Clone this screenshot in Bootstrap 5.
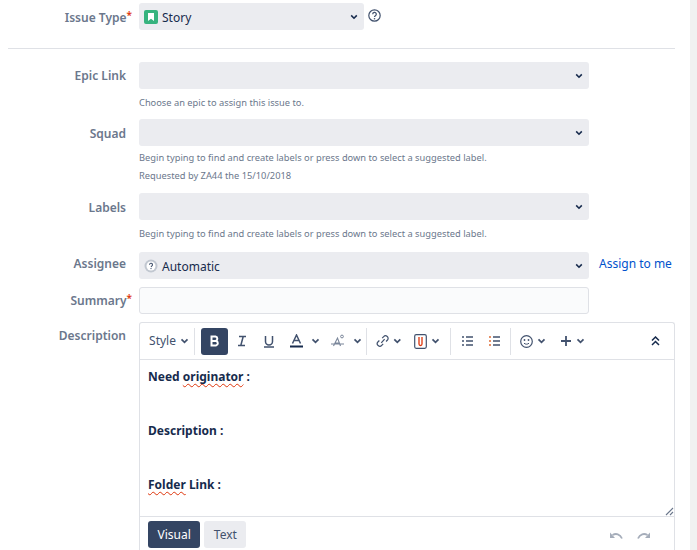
<!DOCTYPE html>
<html lang="en"><head><meta charset="utf-8"><title>Create Issue</title>
<link href="https://cdn.jsdelivr.net/npm/bootstrap@5.3.0/dist/css/bootstrap.min.css" rel="stylesheet">
<style>
html,body{height:550px;overflow:hidden;background:#fff}
body{font-family:"Noto Sans",sans-serif;font-size:12px;color:#172b4d}
.page-wrap{width:690px;height:550px;overflow:hidden;padding-top:3px}
.scroll-strip{position:fixed;top:0;right:0;width:7px;height:550px;background:#f1f1f1}
.frow{display:flex;align-items:flex-start}
.flabel{width:126px;flex:none;text-align:right;color:#6b778c;font-weight:600;font-size:12px;line-height:20px;padding-top:4px}
.flabel.up{padding-top:2px}
.flabel.lo{padding-top:5px}
.req{color:#de350b;font-size:10px;vertical-align:top;line-height:14px;margin-right:-6px}
.fbody{margin-left:13px;flex:none;width:450px}
.fakesel{height:27px;border-radius:3px;background:#ebecf0;display:flex;align-items:center;padding:0 6px 0 5px;font-size:12px;line-height:20px}
.seltxt{padding-top:2px}
.chev{margin-left:auto;flex:none}
.w-short{width:225px}
.icon-gap{margin-right:4px}
.helptxt{font-size:9.3px;line-height:18px;color:#6b778c;margin-top:5px}
.helptxt.tight{margin-top:3px}
.helptxt + .helptxt{margin-top:0}
.divider{margin:18px 15px 13px 8px;border-top:1px solid #dfe1e6;height:0}
.summary-box{height:27px;border:1px solid #dfe1e6;border-radius:3px;background:#fafbfc}
.editor{margin-left:13px;width:536px;border:1px solid #dfe1e6;border-radius:3px 3px 0 0;border-bottom:0;height:240px}
.tbar{height:37px;border-bottom:1px solid #dfe1e6;display:flex;align-items:center;padding-left:4px;color:#42526e}
.tbtn{height:27px;display:flex;align-items:center;justify-content:center;flex:none}
.tsep{width:1px;height:27px;background:#dfe1e6;flex:none}
.tbtn.on{background:#344563;border-radius:3px}
.w-style{width:50px;font-size:12px}
.w27{width:27px}.w45{width:45px}.w38{width:38px}.w26{width:26px}.w32{width:32px}.w22{width:22px}.w30{width:30px}
.ml1{margin-left:1px}.ml5{margin-left:5px}.ml7{margin-left:7px}.ml9{margin-left:9px}.ml11{margin-left:11px}.mr6{margin-right:6px}
.econtent{height:157px;padding:3px 8px;font-weight:700;font-size:12px;color:#172b4d;line-height:27px;border-bottom:1px solid #dfe1e6;position:relative}
.spell{text-decoration:underline wavy #de350b 1px;text-underline-offset:2px;text-decoration-skip-ink:none}
.grip{position:absolute;right:0;bottom:0}
.ebottom{display:flex;align-items:center;padding:4px 0 0 8px;gap:4px}
.mode{height:27px;border-radius:3px;display:flex;align-items:center;padding:0 9.500px;font-size:12px;background:#ebecf0;color:#42526e}
.mode.active{background:#344563;color:#fff}
.undos{margin-left:auto;margin-right:24px;display:flex;gap:14px}
.assign{color:#0052cc;font-size:12px;text-decoration:none;margin-left:10px;line-height:20px;padding-top:2px;white-space:nowrap}
.qicon{margin-top:6px}
.mt-sq{margin-top:7px}.mt-la{margin-top:8px}.mt-as{margin-top:9px}.mt-su{margin-top:8px}
</style></head><body>
<div class="page-wrap">
<div class="frow"><div class="flabel lo">Issue Type<span class="req">*</span></div>
 <div class="fbody d-flex align-items-start"><div class="fakesel w-short">
  <svg width="14" height="14" viewBox="0 0 14 14" class="icon-gap"><rect width="14" height="14" rx="2" fill="#36b37e"/><path d="M4 3h6v8L7 8.800 4 11z" fill="#fff"/></svg>
  <span class="seltxt">Story</span>
  <svg class="chev" width="8" height="6" viewBox="0 0 10 7"><path d="M1.500 1.500 5 5l3.500-3.500" fill="none" stroke="#172b4d" stroke-width="2"/></svg></div>
  <svg class="ms-1 qicon" width="13" height="13" viewBox="0 0 13 13"><circle cx="6.500" cy="6.500" r="5.700" fill="none" stroke="#42526e" stroke-width="1.200"/><path d="M4.700 5.200a1.800 1.800 0 1 1 2.700 1.500c-.6.4-.9.700-.9 1.300" fill="none" stroke="#42526e" stroke-width="1.200"/><circle cx="6.500" cy="9.800" r=".8" fill="#42526e"/></svg>
 </div></div>
<div class="divider"></div>
<div class="frow"><div class="flabel">Epic Link</div><div class="fbody"><div class="fakesel"><svg class="chev" width="8" height="6" viewBox="0 0 10 7"><path d="M1.500 1.500 5 5l3.500-3.500" fill="none" stroke="#172b4d" stroke-width="2"/></svg></div>
 <div class="helptxt">Choose an epic to assign this issue to.</div></div></div>
<div class="frow mt-sq"><div class="flabel lo">Squad</div><div class="fbody"><div class="fakesel"><svg class="chev" width="8" height="6" viewBox="0 0 10 7"><path d="M1.500 1.500 5 5l3.500-3.500" fill="none" stroke="#172b4d" stroke-width="2"/></svg></div>
 <div class="helptxt tight">Begin typing to find and create labels or press down to select a suggested label.</div><div class="helptxt">Requested by ZA44 the 15/10/2018</div></div></div>
<div class="frow mt-la"><div class="flabel lo">Labels</div><div class="fbody"><div class="fakesel"><svg class="chev" width="8" height="6" viewBox="0 0 10 7"><path d="M1.500 1.500 5 5l3.500-3.500" fill="none" stroke="#172b4d" stroke-width="2"/></svg></div>
 <div class="helptxt">Begin typing to find and create labels or press down to select a suggested label.</div></div></div>
<div class="frow mt-as"><div class="flabel up">Assignee</div><div class="fbody"><div class="fakesel">
  <svg width="14" height="14" viewBox="0 0 14 14" class="icon-gap"><circle cx="7" cy="7" r="6.500" fill="#c1c7d0"/><circle cx="7" cy="7" r="4.500" fill="#fff"/><path d="M5.500 5.800a1.500 1.500 0 1 1 2.200 1.300L7 8" fill="none" stroke="#42526e" stroke-width="1.100"/><circle cx="7" cy="9.600" r=".7" fill="#42526e"/></svg>
  <span class="seltxt">Automatic</span><svg class="chev" width="8" height="6" viewBox="0 0 10 7"><path d="M1.500 1.500 5 5l3.500-3.500" fill="none" stroke="#172b4d" stroke-width="2"/></svg></div></div>
  <a class="assign" href="#">Assign to me</a></div>
<div class="frow mt-su"><div class="flabel">Summary<span class="req">*</span></div><div class="fbody"><div class="summary-box"></div></div></div>
<div class="frow mt-su"><div class="flabel">Description</div>
 <div class="editor">
  <div class="tbar">
   <div class="tbtn w-style">Style<svg class="ms-1" width="9" height="6" viewBox="0 0 10 7"><path d="M1.500 1.500 5 5l3.500-3.500" fill="none" stroke="#42526e" stroke-width="2"/></svg></div>
   <div class="tsep mr6"></div>
   <div class="tbtn on w27"><svg width="12" height="12" viewBox="0 0 12 12"><path d="M2.500 1.500h4a2.300 2.300 0 0 1 0 4.500h-4zM2.500 6h4.500a2.300 2.300 0 0 1 0 4.500H2.500z" fill="none" stroke="#fff" stroke-width="2"/></svg></div>
   <div class="tbtn w27"><svg width="12" height="12" viewBox="0 0 12 12"><path d="M3 1.500h7M2 10.500h7M7.200 1.500 4.800 10.500" fill="none" stroke="#42526e" stroke-width="1.500"/></svg></div>
   <div class="tbtn w27"><svg width="12" height="13" viewBox="0 0 12 13"><path d="M2.500 1v5.500a3.500 3.500 0 0 0 7 0V1M1 12h10" fill="none" stroke="#42526e" stroke-width="1.500"/></svg></div>
   <div class="tbtn w45"><svg width="13" height="14" viewBox="0 0 13 14"><path d="M2.500 9.500 6.500 1l4 8.500M4 6.500h5" fill="none" stroke="#42526e" stroke-width="1.500"/><rect y="11.500" width="13" height="2" fill="#172b4d"/></svg><svg class="ms-2" width="9" height="6" viewBox="0 0 10 7"><path d="M1.500 1.500 5 5l3.500-3.500" fill="none" stroke="#42526e" stroke-width="2"/></svg></div>
   <div class="tbtn w38"><svg width="14" height="14" viewBox="0 0 14 14"><path d="M2.500 12 6.500 4l3 8M4 9h4.500M0 10h13" fill="none" stroke="#7a869a" stroke-width="1.100"/><circle cx="11" cy="2.500" r="1.400" fill="none" stroke="#7a869a"/></svg><svg class="ms-2" width="9" height="6" viewBox="0 0 10 7"><path d="M1.500 1.500 5 5l3.500-3.500" fill="none" stroke="#42526e" stroke-width="2"/></svg></div>
   <div class="tsep ml1"></div>
   <div class="tbtn w26 ml9"><svg width="14" height="12" viewBox="0 0 14 12"><path d="M5.500 8 9 4M6.500 3 8 1.500a2.600 2.600 0 0 1 4 3.500L10.500 6.500M7.500 9 6 10.500A2.600 2.600 0 0 1 2 7L3.500 5.500" fill="none" stroke="#42526e" stroke-width="1.300"/></svg><svg class="ms-1" width="9" height="6" viewBox="0 0 10 7"><path d="M1.500 1.500 5 5l3.500-3.500" fill="none" stroke="#42526e" stroke-width="2"/></svg></div>
   <div class="tbtn w32 ml9"><svg width="13" height="15" viewBox="0 0 13 15"><rect x=".7" y=".7" width="11.600" height="13.600" rx="1.500" fill="none" stroke="#42526e" stroke-width="1.200"/><path d="M5 3v7a1.500 1.500 0 0 0 3 0V3" fill="none" stroke="#de350b" stroke-width="1.300"/></svg><svg class="ms-1" width="9" height="6" viewBox="0 0 10 7"><path d="M1.500 1.500 5 5l3.500-3.500" fill="none" stroke="#42526e" stroke-width="2"/></svg></div>
   <div class="tsep ml7"></div>
   <div class="tbtn w22 ml5"><svg width="11" height="10" viewBox="0 0 11 10"><path d="M0 1h2M0 5h2M0 9h2M4 1h7M4 5h7M4 9h7" stroke="#42526e" stroke-width="1.500"/></svg></div>
   <div class="tbtn w22 ml5"><svg width="11" height="10" viewBox="0 0 11 10"><path d="M0 1h2M0 5h2M0 9h2" stroke="#de6b35" stroke-width="1.500"/><path d="M4 1h7M4 5h7M4 9h7" stroke="#42526e" stroke-width="1.500"/></svg></div>
   <div class="tsep ml5"></div>
   <div class="tbtn w30 ml7"><svg width="13" height="13" viewBox="0 0 13 13"><circle cx="6.500" cy="6.500" r="5.800" fill="none" stroke="#42526e" stroke-width="1.200"/><circle cx="4.500" cy="5" r=".9" fill="#42526e"/><circle cx="8.500" cy="5" r=".9" fill="#42526e"/><path d="M4 8.200c1.300 1.300 3.700 1.300 5 0" fill="none" stroke="#42526e"/></svg><svg class="ms-1" width="9" height="6" viewBox="0 0 10 7"><path d="M1.500 1.500 5 5l3.500-3.500" fill="none" stroke="#42526e" stroke-width="2"/></svg></div>
   <div class="tbtn w26 ml11"><svg width="12" height="12" viewBox="0 0 12 12"><path d="M6 1v10M1 6h10" stroke="#42526e" stroke-width="1.800"/></svg><svg class="ms-1" width="9" height="6" viewBox="0 0 10 7"><path d="M1.500 1.500 5 5l3.500-3.500" fill="none" stroke="#42526e" stroke-width="2"/></svg></div>
   <div class="tbtn ms-auto w38"><svg width="9" height="10" viewBox="0 0 9 10"><path d="M1 4.500 4.500 1 8 4.500M1 9 4.500 5.500 8 9" fill="none" stroke="#172b4d" stroke-width="1.500"/></svg></div>
  </div>
  <div class="econtent"><div>Need <span class="spell">originator</span> :</div><div>&nbsp;</div><div>Description :</div><div>&nbsp;</div><div><span class="spell">Folder</span> Link :</div>
   <svg class="grip" width="10" height="10" viewBox="0 0 10 10"><path d="M2 9 9 2M6 9 9 6" stroke="#6b778c" stroke-width="1.100"/></svg></div>
  <div class="ebottom"><div class="mode active">Visual</div><div class="mode">Text</div>
   <div class="undos"><svg width="13" height="8" viewBox="0 0 13 8"><path d="M12 7.500C10 3 6 2 2.500 4" fill="none" stroke="#a5adba" stroke-width="1.800"/><path d="M0 1.500v5.500h5z" fill="#a5adba"/></svg><svg width="13" height="8" viewBox="0 0 13 8"><path d="M1 7.500C3 3 7 2 10.500 4" fill="none" stroke="#a5adba" stroke-width="1.800"/><path d="M13 1.500v5.500H8z" fill="#a5adba"/></svg></div></div>
 </div></div>
</div>
<div class="scroll-strip"></div>
</body></html>
